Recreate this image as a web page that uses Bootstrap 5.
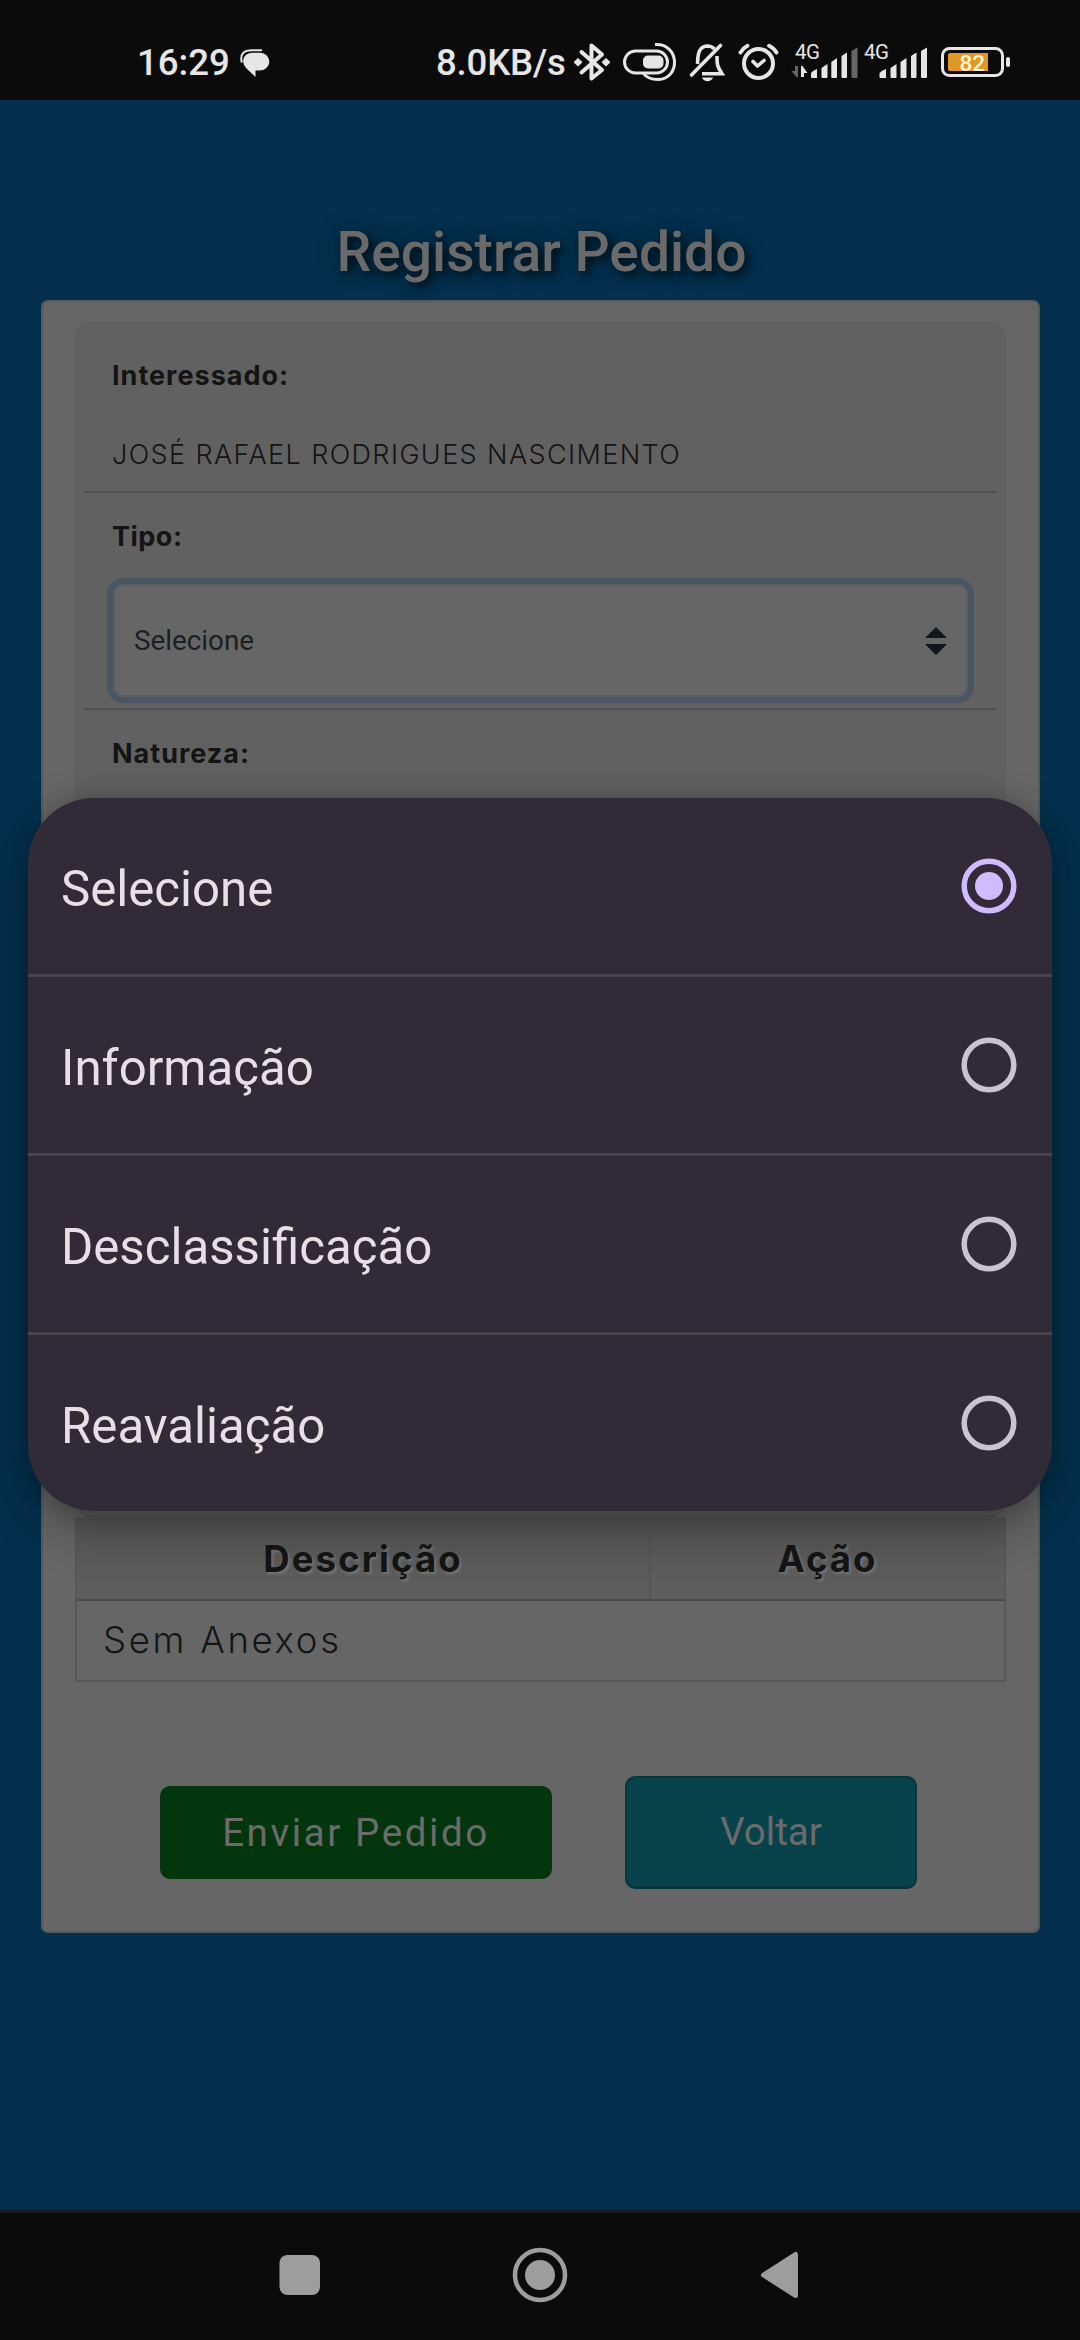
<!DOCTYPE html>
<html lang="pt-BR">
<head>
<meta charset="utf-8">
<title>Registrar Pedido</title>
<meta name="viewport" content="width=device-width, initial-scale=1">
<link rel="stylesheet" href="https://cdn.jsdelivr.net/npm/bootstrap@5.3.0/dist/css/bootstrap.min.css">
<style>
html,body{margin:0;height:2340px;overflow:hidden}
body{background:#04304d;font-family:Roboto,sans-serif;color:#151515;line-height:1}
.status-bar{height:100px;background:#0b0b0b;color:#e6e6e6}
.status-bar svg{display:block;flex:none}
.status-txt{font-size:36.6px;font-weight:500;line-height:50px;margin-top:38px;white-space:nowrap}
.clock{margin-left:137px;width:103px}
.speed{margin-left:166px;width:137px;letter-spacing:-.2px}
.page-area{height:2110px}
.page-title{font-size:55.2px;font-weight:500;line-height:64px;color:#6a6a6a;padding:120px 0 0 3px;height:200px;text-shadow:4px 4px 8px #000a,0 0 22px #0005;margin:0}
.panel{width:999px;height:1633px;margin-left:41px;background:#666;border:2px solid #555a5d;border-radius:7px;padding:20px 32px 0 32px}
.well-top{height:1195px;background:#616161;border-radius:16px;border:1px solid #606060;padding:0 8px;border-bottom:2px solid #585858}
.inter{font-family:Inter,sans-serif}
.field-row{border-bottom:2px solid #4c5152;padding:0 29px 0 28px}
.row-who{height:170px}
.row-kind{height:217px}
.lbl{font-size:27px;font-weight:700;color:#141414;display:block;line-height:40px;padding-top:24px;letter-spacing:1px}
.row-who .lbl{padding-top:33px}
.row-kind .lbl{height:91px;letter-spacing:.5px}
.val{font-size:27px;font-weight:300;color:#141414;line-height:40px;white-space:nowrap;padding-top:39px;letter-spacing:1.4px}
.pick{height:113px;margin-left:1px;border:2px solid #5a5f63;border-radius:10px;background:#666;box-shadow:0 0 0 6px #4b5664;color:#1d2023;font-size:27.8px;padding:0 19px;line-height:40px}
.att{border:2px solid #585858;border-top-width:3px;height:165px}
.att-head{height:81px;border-bottom:2px solid #4b4b4b;background:linear-gradient(#595959,#5e5e5e);font-size:36.5px;font-weight:700;text-shadow:2px 2px 3px #777;letter-spacing:2.1px}
.att-head div{line-height:78px;text-align:center}
.att-head .c1{width:574px;border-right:2px solid #565656}
.att-body{font-size:36.5px;font-weight:300;line-height:78px;padding-left:26px;letter-spacing:2.7px}
.actions{margin:94px 0 0 85px;gap:73px}
.b-send,.b-back{font-size:38.5px;color:#6b6b6b;border-radius:10px;padding:0;white-space:nowrap}
.b-send{width:392px;height:93px;background:#03360d;border:0;letter-spacing:2.6px}
.b-back{width:292px;height:113px;background:#08424a;border:2px solid #07363d;border-bottom-width:3px}
.sheet,.sheet-shade{position:absolute;left:28px;top:798px;width:1024px;height:713px;border-radius:66px}
.sheet{background:#302b36;overflow:hidden}
.sheet-shade{box-shadow:0 18px 50px #0005,0 0 20px #0002}
.opt{height:179px;border-bottom:3px solid #48454e;padding:0 35px 0 33px;color:#e6e0e6;font-size:49.2px}
.opt:last-child{height:176px;border:0}
.opt span{line-height:60px;padding-top:6px}
.opt svg{display:block}
.nav-sys{height:130px;background:#0b0b0b;border-top:3px solid #1a1b20}
.nav-sys svg{display:block}
</style>
<script src="https://cdn.jsdelivr.net/npm/bootstrap@5.3.0/dist/js/bootstrap.bundle.min.js"></script>
</head>
<body>
<header class="status-bar d-flex">
  <div class="status-txt clock">16:29</div>
  <svg width="30" height="100" viewBox="240 0 30 100"><path d="M241.800 62.500C239.500 53 245 50.300 252 50.300H262" fill="none" stroke="#e6e6e6" stroke-width="2"/><path d="M252.500 52.700h7c13 0 13 17.800 0 17.800h-4V77L246.500 68.500C240 62 243.500 52.700 252.500 52.700z" fill="#e6e6e6"/></svg>
  <div class="status-txt speed">8.0KB/s</div>
  <svg width="440" height="100" viewBox="573 0 440 100" fill="none" stroke="#e6e6e6" font-family="Roboto, sans-serif">
    <path d="M581.500 52L602 70L591.500 78.500V45.500L602 54.500L581.500 72.500" stroke-width="4" stroke-linejoin="round" stroke-linecap="round"/>
    <path d="M574 62.300l4-3.800 4 3.800-4 3.800zM602 62.300l4-3.800 4 3.800-4 3.800z" fill="#e6e6e6"/>
    <rect x="624.500" y="51" width="43" height="22" rx="11" stroke-width="3"/>
    <rect x="643" y="55.500" width="20.500" height="13" rx="5" fill="#e6e6e6" stroke="none"/>
    <path d="M655 44.600C680 43 681 79 658 79.500C651 79.500 646 77 643.500 73.500" stroke-width="3"/>
    <g stroke-width="3.600"><path d="M697.500 64C698 58 697 46.500 707.500 46C711 46 713 47.500 714.500 49M717 56C717 64 717 66 722 73.700H702"/><path d="M691.500 75L720.500 45.500" stroke-linecap="round"/></g>
    <path d="M702 77.500h11c-2 5-9 5-11 0z" fill="#e6e6e6" stroke="none"/>
    <circle cx="758.500" cy="63.500" r="14.500" stroke-width="4"/>
    <path d="M753 61.500L757.500 66L764 60.500" stroke-width="3.600" stroke-linecap="round" stroke-linejoin="round"/>
    <path d="M740.500 52.500Q743 48 747.500 45.700M769 45.700Q774 48 776.500 52.500" stroke-width="3.800" stroke-linecap="round"/>
    <g fill="#e6e6e6" stroke="none">
      <text x="795" y="59" font-size="20.500" textLength="25">4G</text><text x="864" y="59" font-size="20.500" textLength="25">4G</text>
      <path d="M798 66v11h-1.500l-5-6h3.500V66z" fill="#666"/><path d="M801 77V66h1.500l5 7h-3.500v4z"/>
      <path d="M811 73q2-2.500 6-4v9h-5q-1 0-1-1zM821.500 68l6-4v13q0 1-1 1h-4q-1 0-1-1zM831.300 62l5.700-4v19q0 1-1 1h-3.700q-1 0-1-1zM841.500 56l5.500-3.500V77q0 1-1 1h-3.500q-1 0-1-1z"/>
      <path d="M851.500 51l6-3.500V77q0 1-1 1h-4q-1 0-1-1z" fill="#666"/>
      <path d="M879.500 73q2-2.500 6.500-4v9h-5.500q-1 0-1-1zM890.500 68l6-4v13q0 1-1 1h-4q-1 0-1-1zM900.500 62l6-4v19q0 1-1 1h-4q-1 0-1-1zM911 56l5.500-3.500V77q0 1-1 1H912q-1 0-1-1zM921 51l6-3.500V77q0 1-1 1h-4q-1 0-1-1z"/>
    </g>
    <rect x="942.500" y="48.500" width="60" height="27" rx="7" stroke-width="3"/>
    <path d="M950 53h38v18h-38q-2 0-2-2V55q0-2 2-2z" fill="#de9823" stroke="none"/>
    <text x="959.500" y="70.500" font-size="22.500" font-weight="500" fill="#fff2dc" stroke="none" textLength="25.500">82</text>
    <rect x="1006" y="57" width="4" height="10" rx="2" fill="#e6e6e6" stroke="none"/>
  </svg>
</header>

<main class="page-area">
  <h1 class="page-title text-center">Registrar Pedido</h1>
  <section class="panel">
    <div class="well-top">
      <div class="field-row row-who">
        <label class="lbl inter">Interessado:</label>
        <div class="val inter">JOSÉ RAFAEL RODRIGUES NASCIMENTO</div>
      </div>
      <div class="field-row row-kind">
        <label class="lbl inter">Tipo:</label>
        <div class="pick d-flex align-items-center justify-content-between"><span>Selecione</span>
          <svg width="22" height="30" viewBox="0 0 22 30" fill="#141619"><path d="M11 1L22 12H0zM0 18h22L11 29z"/></svg></div>
      </div>
      <div class="field-row border-0"><label class="lbl inter">Natureza:</label></div>
    </div>
    <div class="att inter">
      <div class="att-head d-flex"><div class="c1">Descrição</div><div class="flex-fill">Ação</div></div>
      <div class="att-body">Sem Anexos</div>
    </div>
    <div class="actions d-flex align-items-center">
      <button class="btn b-send">Enviar Pedido</button>
      <button class="btn b-back">Voltar</button>
    </div>
  </section>
</main>
<nav class="nav-sys">
  <svg width="1080" height="127" viewBox="0 2213 1080 127" fill="#9d9d9d"><rect x="279.500" y="2255" width="40.500" height="40" rx="8"/><circle cx="540" cy="2275" r="25" fill="none" stroke="#9d9d9d" stroke-width="4.500"/><circle cx="540" cy="2275" r="15"/><path d="M763.500 2275L795.500 2254.500V2295.500z" stroke="#9d9d9d" stroke-width="5" stroke-linejoin="round"/></svg>
</nav>
<div class="sheet-shade"></div>
<div class="sheet">
  <div class="opt d-flex align-items-center justify-content-between"><span>Selecione</span><svg width="56" height="56" fill="none" stroke="#cfbcff" stroke-width="5.500"><circle cx="28" cy="28" r="24.800"/><circle cx="28" cy="28" r="14" fill="#cfbcff" stroke="none"/></svg></div>
  <div class="opt d-flex align-items-center justify-content-between"><span>Informação</span><svg width="56" height="56" fill="none" stroke="#c9c4cf" stroke-width="5.500"><circle cx="28" cy="28" r="24.800"/></svg></div>
  <div class="opt d-flex align-items-center justify-content-between"><span>Desclassificação</span><svg width="56" height="56" fill="none" stroke="#c9c4cf" stroke-width="5.500"><circle cx="28" cy="28" r="24.800"/></svg></div>
  <div class="opt d-flex align-items-center justify-content-between"><span>Reavaliação</span><svg width="56" height="56" fill="none" stroke="#c9c4cf" stroke-width="5.500"><circle cx="28" cy="28" r="24.800"/></svg></div>
</div>
</body>
</html>
